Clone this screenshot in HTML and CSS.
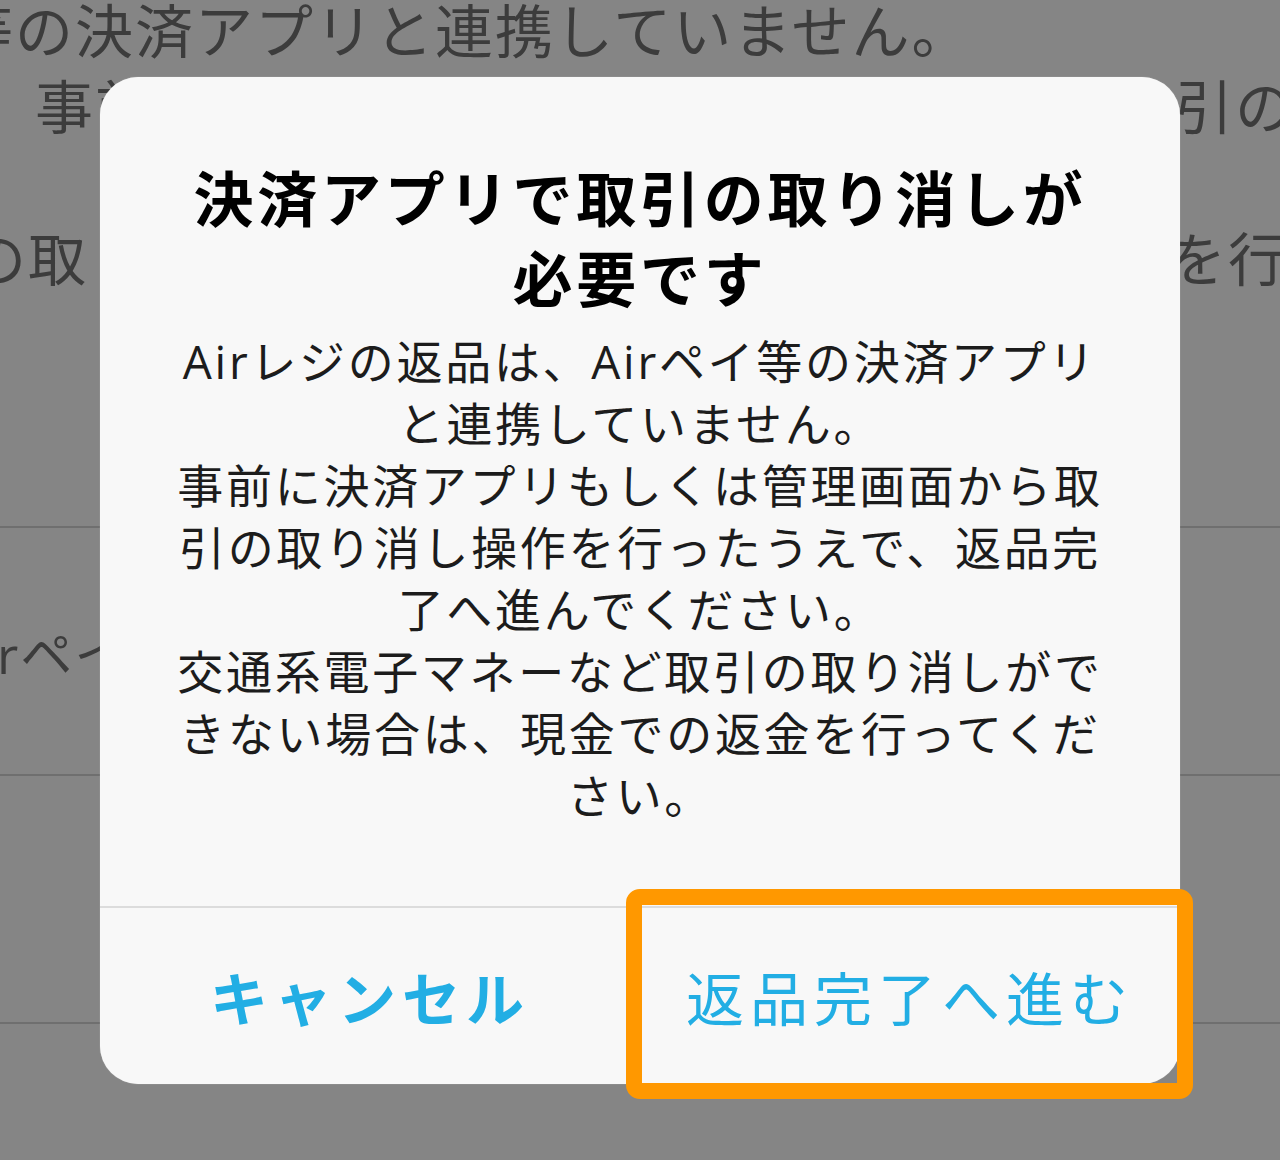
FILE: index.html
```html
<!DOCTYPE html>
<html lang="ja">
<head>
    <meta charset="UTF-8">
    <meta name="viewport" content="width=device-width, initial-scale=1.0">
    <title>返品</title>
    <link rel="stylesheet" href="styles.css">
</head>
<body>
    <div class="screen">
        <div class="notice">
            <p class="notice-line first">等の決済アプリと連携していません。</p>
            <p class="notice-line second">事前に決済アプリもしくは管理画面から取引の</p>
            <p class="notice-line third">の取り消しができない場合は、現金での返金を行ってください。</p>
        </div>

        <ul class="list">
            <li class="list-row"><span class="list-label">Airペイ</span></li>
            <li class="list-row"></li>
            <li class="list-row"></li>
        </ul>

        <div class="overlay">
            <div class="dialog">
                <h2 class="dialog-title">決済アプリで取引の取り消しが<br>必要です</h2>
                <p class="dialog-message">
                    Airレジの返品は、Airペイ等の決済アプリ<br>
                    と連携していません。<br>
                    事前に決済アプリもしくは管理画面から取<br>
                    引の取り消し操作を行ったうえで、返品完<br>
                    了へ進んでください。<br>
                    交通系電子マネーなど取引の取り消しがで<br>
                    きない場合は、現金での返金を行ってくだ<br>
                    さい。
                </p>
                <div class="dialog-actions">
                    <button type="button" class="dialog-btn cancel">キャンセル</button>
                    <button type="button" class="dialog-btn">返品完了へ進む</button>
                    <div class="highlight"></div>
                </div>
            </div>
        </div>
    </div>
</body>
</html>
```

FILE: styles.css
```css
body {
    margin: 0;
    background-color: #858585;
    font-family: "Open Sans", "Noto Sans CJK JP", sans-serif;
}

.screen {
    position: relative;
    height: 1160px;
    overflow: hidden;
}

/* page behind the dialog */
.notice {
    margin-top: -7px;
    font-size: 58px;
    line-height: 76px;
    letter-spacing: 2px;
    color: #3c3c3c;
    white-space: nowrap;
}

.notice-line {
    margin: 0;
}

.notice-line.first {
    margin-left: -45px;
}

.notice-line.second {
    margin-left: 35px;
}

.notice-line.third {
    margin-top: 76px;
    margin-left: -32px;
}

.list {
    list-style: none;
    margin: 229px 0 0;
    padding: 0;
}

.list-row {
    display: flex;
    align-items: center;
    height: 246px;
    border-top: 2px solid #6f6f6f;
}

.list-label {
    margin-left: -53px;
    font-size: 52px;
    letter-spacing: 2px;
    color: #3c3c3c;
}

/* dialog */
.overlay {
    position: absolute;
    top: 0;
    left: 0;
    right: 0;
    bottom: 0;
    display: flex;
    justify-content: center;
    align-items: center;
}

.dialog {
    width: 1080px;
    background-color: #f8f8f8;
    border-radius: 38px;
    box-shadow: 0 0 1px rgba(255, 255, 255, 0.6);
    text-align: center;
}

.dialog-title {
    margin: 0;
    padding: 82px 40px 0;
    font-size: 60px;
    font-weight: 700;
    line-height: 80px;
    letter-spacing: 3.8px;
    color: #000;
}

.dialog-message {
    margin: 11px 0 0;
    padding: 0 40px 80px;
    font-size: 46px;
    line-height: 62px;
    letter-spacing: 2.7px;
    color: #1c1c1c;
}

.dialog-actions {
    position: relative;
    display: flex;
    height: 176px;
    border-top: 2px solid #dcdcdc;
}

.dialog-btn {
    flex: 1;
    background: none;
    border: none;
    padding: 0;
    font-family: inherit;
    font-size: 58px;
    letter-spacing: 6px;
    color: #22aee4;
    cursor: pointer;
}

.dialog-btn.cancel {
    font-weight: 700;
}

.highlight {
    position: absolute;
    top: -19px;
    bottom: -15px;
    left: calc(50% - 14px);
    right: -13px;
    border: 16px solid #ff9800;
    border-radius: 14px;
    pointer-events: none;
}
```
